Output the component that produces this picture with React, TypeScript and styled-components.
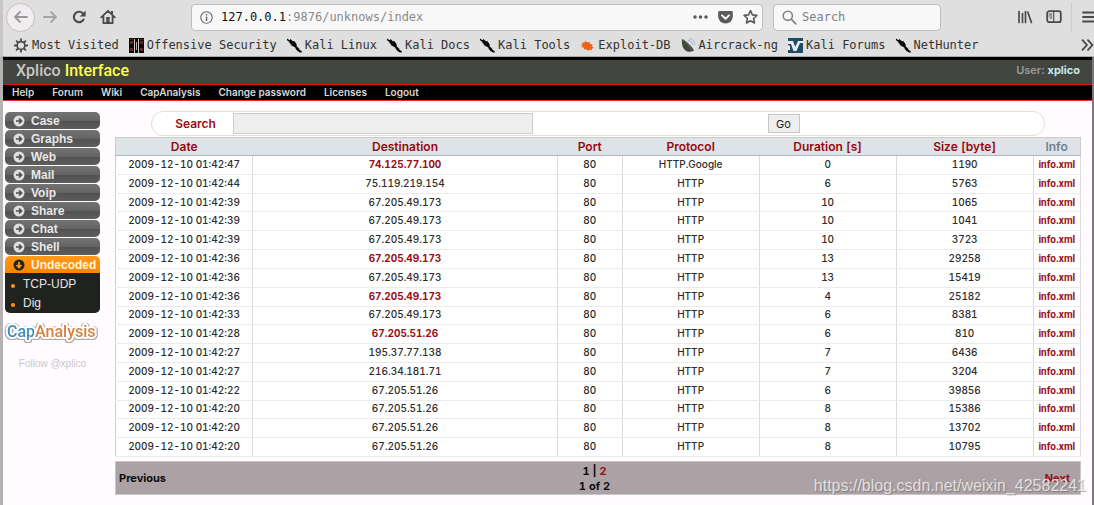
import React from 'react';
import styled, { createGlobalStyle } from 'styled-components';

const GlobalStyle = createGlobalStyle`
  * { box-sizing: border-box; }
  body { margin: 0; background: #fffbff; font-family: Inter, Roboto, "Liberation Sans", sans-serif; }
  a { text-decoration: none; }
  button, input { font: inherit; }
`;

const Screen = styled.div`
  position: relative;
  min-height: 100vh;
  display: flex;
  flex-direction: column;
`;

/* Browser window */
const Chrome = styled.header`
  background: #dfdfdf;
  border-bottom: 1px solid #a9a9a9;
  border-left: 3px solid #c9c5c5;
  font-family: "DejaVu Sans Mono", "Liberation Mono", monospace;
  font-size: 12px;
  color: #3b3b3b;
  overflow: hidden;
`;
const Toolbar = styled.div`
  display: flex;
  align-items: center;
  height: 34px;
  padding-left: 3px;
`;
const IconButton = styled.button<{ $round?: boolean }>`
  width: 29px;
  height: 29px;
  padding: 0;
  flex: none;
  display: flex;
  align-items: center;
  justify-content: center;
  color: #4a4a4a;
  border: 1px solid ${(p) => (p.$round ? '#c4c0c2' : 'transparent')};
  border-radius: 50%;
  background: ${(p) => (p.$round ? '#f1ecef' : 'transparent')};
`;
const Field = styled.div`
  display: flex;
  align-items: center;
  height: 27px;
  background: #f8f8f8;
  border: 1px solid #bdbdbd;
  border-radius: 4px;
`;
const AddressField = styled(Field)`
  flex: 1;
  margin-left: 69px;
  padding: 0 4px 0 8px;
  gap: 8px;
`;
const Address = styled.div`
  flex: 1;
  color: #8a8a8a;
  b { font-weight: 400; color: #111; }
`;
const SearchField = styled(Field)`
  width: 168px;
  margin: 0 69px 0 10px;
  padding: 0 8px;
  gap: 5px;
  svg { flex: none; }
  input {
    width: 100%;
    border: 0;
    padding: 0;
    background: transparent;
    color: #444;
    outline: 0;
  }
  input::placeholder { color: #808080; opacity: 1; }
`;
const Divider = styled.span`
  width: 1px;
  height: 30px;
  margin: 0 3px;
  background: #cbcbcb;
`;
const MenuButton = styled(IconButton)`
  width: 19px;
  justify-content: flex-end;
  border: 0;
`;
const Bookmarks = styled.nav`
  display: flex;
  align-items: center;
  height: 22px;
  padding-left: 11px;
  gap: 10px;
  white-space: nowrap;
`;
const Bookmark = styled.a`
  display: flex;
  align-items: center;
  gap: 3px;
  color: #333;
  svg { flex: none; }
`;
const Overflow = styled.button`
  margin-left: auto;
  border: 0;
  padding: 0;
  background: none;
  color: #444;
  display: flex;
`;

/* Site */
const Site = styled.div`
  flex: 1;
  border-left: 3px solid #b5b2b4;
  border-right: 2px solid #7b797c;
`;
const Banner = styled.div`
  display: flex;
  justify-content: space-between;
  height: 27px;
  padding: 0 12px 0 13px;
  border-top: 3px solid #000;
  background: #434541;
`;
const Brand = styled.h1`
  margin: 0;
  font-family: Roboto, sans-serif;
  font-size: 16px;
  line-height: 21px;
  font-weight: 500;
  color: #c8c8c8;
  span { color: #ffff4d; }
`;
const User = styled.div`
  font-size: 11px;
  line-height: 21px;
  font-weight: 600;
  color: #9a9a9a;
  a { color: #c3ecec; font-weight: 700; }
`;
const Menu = styled.nav`
  display: flex;
  align-items: center;
  gap: 18px;
  height: 17px;
  padding-left: 9px;
  background: #000;
  border-top: 1px solid #e01010;
  border-bottom: 1px solid #f02525;
  a { color: #d8d8d8; font-size: 10px; line-height: 15px; font-weight: 600; }
`;
const Body = styled.div`
  display: flex;
  align-items: flex-start;
  padding: 10px 11px 8px 2px;
  gap: 15px;
`;

const Sidebar = styled.aside`
  width: 95px;
  flex: none;
  padding-top: 1px;
  display: flex;
  flex-direction: column;
  gap: 1px;
  font-family: "Liberation Sans", Arial, sans-serif;
  font-size: 12px;
`;
const Section = styled.button<{ $open?: boolean }>`
  display: flex;
  align-items: center;
  height: 17px;
  padding: 0 0 0 8px;
  gap: 6px;
  border: 0;
  border-radius: ${(p) => (p.$open ? '5px 5px 0 0' : '5px')};
  font-weight: 700;
  white-space: nowrap;
  color: ${(p) => (p.$open ? '#fff6e0' : '#e8e8e8')};
  background: ${(p) =>
    p.$open
      ? 'linear-gradient(#ff9a18, #f98500)'
      : 'linear-gradient(#737373 0, #646464 50%, #505050 51%, #5e5e5e 100%)'};
  svg { flex: none; }
`;
const SubMenu = styled.ul`
  margin: -1px 0 0;
  padding: 1px 0;
  list-style: none;
  background: #20221f;
  border-radius: 0 0 5px 5px;
`;
const SubItem = styled.li`
  display: flex;
  align-items: center;
  height: 19px;
  padding-left: 6px;
  gap: 8px;
  &::before {
    content: "";
    width: 4px;
    height: 4px;
    margin-top: 4px;
    border-radius: 50%;
    background: #ff9210;
  }
  a { color: #e4e4e4; }
`;
const LogoLink = styled.a`
  display: block;
  height: 26px;
  margin-top: 5px;
  svg {
    display: block;
    overflow: visible;
    filter: drop-shadow(1px 0 0 #aaa) drop-shadow(-1px 0 0 #aaa) drop-shadow(0 1px 0 #aaa);
  }
  text { paint-order: stroke; }
`;
const Follow = styled.a`
  margin-top: 11px;
  text-align: center;
  font-size: 10px;
  line-height: 14px;
  color: #cac7ca;
`;

const Content = styled.main`
  flex: 1;
  min-width: 0;
`;
const SearchForm = styled.form`
  display: grid;
  grid-template-columns: 81px 300px 1fr;
  align-items: center;
  height: 25px;
  margin: 0 36px 1px;
  border: 1px solid #dfe2d0;
  border-radius: 12px;
  background: #fff;
  label {
    padding-left: 6px;
    text-align: center;
    font-size: 12px;
    font-weight: 600;
    color: #a00c14;
  }
  input {
    width: 100%;
    height: 21px;
    border: 1px solid #cdcdcd;
    background: #eee;
  }
`;
const GoButton = styled.button`
  justify-self: center;
  width: 32px;
  height: 19px;
  margin-right: 10px;
  padding: 0;
  border: 1px solid #c6c6c6;
  background: #eee;
  color: #222;
  font-size: 11px;
  line-height: 16px;
`;

const Table = styled.table`
  width: 100%;
  height: 320px;
  table-layout: fixed;
  border-collapse: collapse;
  border: 1px solid #ccc;
  background: #fff;
  color: #2c2c2c;
  text-align: center;
  font-variant-numeric: tabular-nums;
`;
const Head = styled.th<{ $w?: string }>`
  width: ${(p) => p.$w || 'auto'};
  height: 18px;
  padding: 0;
  font-size: 12px;
  line-height: 16px;
  font-weight: 600;
  background: #dde3e6;
  border-bottom: 1px solid #a9b6c4;
  color: #72808e;
  a { color: #96090f; }
`;
const Cell = styled.td`
  padding: 0 0 1px;
  font-size: 10px;
  line-height: 15px;
  font-weight: 500;
  border-bottom: 1px solid #ebebeb;
  border-right: 1px solid #dcdcdc;
`;
const InfoCell = styled(Cell)`
  font-family: Roboto, sans-serif;
`;
const CellLink = styled.a`
  color: #9a0f16;
  font-weight: 700;
`;
const Pager = styled.nav`
  display: grid;
  grid-template-columns: 1fr auto 1fr;
  align-items: center;
  height: 34px;
  margin-top: 4px;
  padding: 1px 10px 0 3px;
  border: 1px solid #c9c5c8;
  background: #aca2a5;
  font-size: 11px;
  line-height: 15px;
  font-weight: 700;
  font-variant-numeric: tabular-nums;
  color: #0c0c0c;
  text-align: center;
  a { color: #9a0f16; }
  > :first-child { text-align: left; }
  > :last-child { text-align: right; }
`;
const Watermark = styled.div`
  position: absolute;
  right: 8px;
  bottom: 10px;
  font: 16px/18px "Liberation Sans", Arial, sans-serif;
  color: rgba(245, 245, 245, 0.8);
  text-shadow: 1px 1px 1px rgba(90, 90, 90, 0.5);
  pointer-events: none;
`;

const stroke = { fill: 'none', stroke: 'currentColor', strokeWidth: 2, strokeLinecap: 'round', strokeLinejoin: 'round' } as const;

const ArrowIcon = ({ flip }: { flip?: boolean }) => (
  <svg width="16" height="16" viewBox="0 0 16 16" color={flip ? '#a5a5a5' : '#9a9698'}>
    <path d={flip ? 'M2 8h12M9 3l5 5-5 5' : 'M14 8H2M7 3L2 8l5 5'} {...stroke} strokeWidth={1.8} />
  </svg>
);
const ReloadIcon = () => (
  <svg width="16" height="16" viewBox="0 0 16 16">
    <path d="M12.6 10.6A5.2 5.2 0 1 1 12 4.6" {...stroke} strokeWidth={2.1} />
    <path d="M14.6 1.6v6H8.8z" fill="currentColor" />
  </svg>
);
const HomeIcon = () => (
  <svg width="16" height="16" viewBox="0 0 16 16">
    <path d="M1.2 8.3L8 1.8l6.8 6.5M3.4 7.5v6.6h9.2V7.5" {...stroke} strokeWidth={1.8} />
    <path d="M6.2 8h3.6v6H6.2z" fill="currentColor" />
    <path d="M11 2h2v3h-2z" fill="currentColor" />
    <circle cx="9" cy="11" r=".6" fill="#dfdfdf" />
  </svg>
);
const InfoIcon = () => (
  <svg width="13" height="13" viewBox="0 0 13 13" color="#686868">
    <circle cx="6.5" cy="6.5" r="5.7" {...stroke} strokeWidth={1.1} />
    <path d="M5.8 5.6h1.5V10H5.8zM5.8 3h1.5v1.5H5.8z" fill="currentColor" />
  </svg>
);
const FieldActions = () => (
  <svg width="66" height="16" viewBox="0 0 66 16" color="#5a5a5c">
    <circle cx="3" cy="8" r="1.8" fill="currentColor" />
    <circle cx="8.5" cy="8" r="1.8" fill="currentColor" />
    <circle cx="14" cy="8" r="1.8" fill="currentColor" />
    <path d="M27.5 2h12q1.3 0 1.3 1.4v4.2a7.2 6.7 0 0 1-14.6 0V3.4Q26.2 2 27.5 2z" fill="currentColor" />
    <path d="M30 6.4l3.5 3.4L37 6.4" {...stroke} stroke="#f8f8f8" />
    <path d="M58.5 1.7l1.9 4.2 4.5.5-3.3 3.1.9 4.5-4-2.3-4 2.3.9-4.5-3.3-3.1 4.5-.5z" {...stroke} strokeWidth={1.6} />
  </svg>
);
const MagnifierIcon = () => (
  <svg width="15" height="15" viewBox="0 0 15 15" color="#858585">
    <circle cx="5.8" cy="5.8" r="4.6" {...stroke} strokeWidth={1.6} />
    <path d="M9.4 9.4l4.4 4.4" {...stroke} strokeWidth={1.8} />
  </svg>
);
const LibraryIcon = () => (
  <svg width="16" height="14" viewBox="0 0 16 14">
    <path d="M2 1.5v11M5.5 3.5v9M8.5 1.5v11M10.8 2l3.6 10.5" {...stroke} strokeWidth={1.7} />
  </svg>
);
const PanelIcon = () => (
  <svg width="16" height="14" viewBox="0 0 16 14">
    <rect x="1.2" y="1.2" width="13.6" height="11" rx="2" {...stroke} strokeWidth={1.8} />
    <path d="M7.7 1.5v10.5M3.2 4h2.6M3.2 6h2.6M4.2 8h1.6" {...stroke} strokeWidth={1.1} />
  </svg>
);
const MenuIcon = () => (
  <svg width="12" height="14" viewBox="0 0 12 14">
    <path d="M1 2.5h14M1 7h14M1 11.5h14" {...stroke} strokeWidth={1.8} />
  </svg>
);
const ChevronsIcon = () => (
  <svg width="13" height="12" viewBox="0 0 13 12">
    <path d="M1.5 1.2L6 6l-4.5 4.8M7 1.2L11.5 6 7 10.8" {...stroke} strokeWidth={1.8} />
  </svg>
);

const GearMark = () => (
  <svg width="15" height="15" viewBox="0 0 15 15" color="#4a4a4a">
    <circle cx="7" cy="7.5" r="3.9" {...stroke} strokeWidth={1.6} />
    <path d="M7 1.2v2M7 11.8v2M.7 7.5h2M11.3 7.5h2M2.6 3.1L4 4.5M10 10.5l1.4 1.4M2.6 11.9L4 10.5M10 4.5l1.4-1.4" {...stroke} strokeWidth={1.8} />
  </svg>
);
const OffensiveMark = () => (
  <svg width="15" height="15" viewBox="0 0 15 15">
    <path d="M0 0h15v15H0z" fill="#0d0808" />
    <path d="M1 3h3v3H1zM11 3h3v3h-3zM1 10h3v3H1zM11 10h3v3h-3z" fill="#5a2a27" />
    <path d="M0 1h4v1H0zM11 1h4v1h-4z" fill="#432020" />
    <path d="M5 15V1h1v14zM9 15V1h1v14z" fill="#cfc6c6" />
    <path d="M7 4h1v8H7z" fill="#b9aeae" />
  </svg>
);
const KaliMark = () => (
  <svg width="15" height="15" viewBox="0 0 15 15">
    <path d="M0 .5l2.5 1.8L3.5 1l2 2 2 .2 2 2.8.3 2.5 2 1.7 1 1.8 2 1.2v1.3h-1.8L10.5 13 8.8 11l-.6-1.5L6 8.3 3.5 7l.8-.8L2 4.8l.8-.6L0 2.3z" fill="#080808" />
  </svg>
);
const ExploitMark = () => (
  <svg width="15" height="15" viewBox="0 0 15 15">
    <path d="M2 4l2 .7L5.5 3l1.8 1.2L9.5 4l.8 2 2.5.8-.8 1.5 1.8 2-2.2.2.2 2-2.3-.8-1.7 1-1.5-1.5-2.5.3.3-1.700L1 9l1.700-1L.5 6.500l2.300-.3z" fill="#ee6216" />
  </svg>
);
const AircrackMark = () => (
  <svg width="15" height="15" viewBox="0 0 15 15">
    <path d="M1 1c3.5 1.5 10 7 12 11.5-3 1.8-6.500 1.600-8.500 0C1.300 10.300.5 5 1 1z" fill="#41483f" />
    <path d="M1.5 1.5c3.5 2.5 7 6 9.5 10.5" stroke="#656c60" fill="none" />
    <path d="M7 2.5c2.5 0 4.5 2 4.5 4.5M8 .7c3.3 0 5.700 2.500 6 5.800" stroke="#a8bfe4" strokeWidth="1.3" fill="none" />
  </svg>
);
const ForumsMark = () => (
  <svg width="15" height="15" viewBox="0 0 15 15">
    <path d="M0 0h15v15H0z" fill="#1d4c66" />
    <path d="M0 3h5l2.3 6L10 3h5v2h-3L8.5 13h-3L3 6H0z" fill="#e7edf0" />
    <path d="M0 7l2 1v4H0z" fill="#e7edf0" />
  </svg>
);
const SectionIcon = ({ open }: { open?: boolean }) => (
  <svg width="12" height="12" viewBox="0 0 12 12">
    <circle cx="6" cy="6" r="5.5" fill={open ? '#2a2418' : '#dedede'} />
    <path
      d="M3 6h5M6 3.5L8.5 6 6 8.5"
      transform={open ? 'rotate(90 6 6)' : undefined}
      fill="none"
      stroke={open ? '#ff9a18' : '#4d4d4d'}
      strokeWidth="1.7"
    />
  </svg>
);
const CapAnalysisLogo = () => (
  <svg width="95" height="26" viewBox="0 0 95 26" fontFamily="Roboto, sans-serif" fontSize="16" fontWeight="500" strokeLinejoin="round">
    <text x="2" y="18" fill="#3f8fbe" stroke="#fff" strokeWidth="4">
      Cap<tspan fill="#d8803f">Analysis</tspan>
    </text>
  </svg>
);

const bookmarks: [string, React.FC][] = [
  ['Most Visited', GearMark],
  ['Offensive Security', OffensiveMark],
  ['Kali Linux', KaliMark],
  ['Kali Docs', KaliMark],
  ['Kali Tools', KaliMark],
  ['Exploit-DB', ExploitMark],
  ['Aircrack-ng', AircrackMark],
  ['Kali Forums', ForumsMark],
  ['NetHunter', KaliMark],
];
const menu = ['Help', 'Forum', 'Wiki', 'CapAnalysis', 'Change password', 'Licenses', 'Logout'];
const sections = ['Case', 'Graphs', 'Web', 'Mail', 'Voip', 'Share', 'Chat', 'Shell'];
const columns: [string, string][] = [
  ['Date', '14.2%'],
  ['Destination', '31.6%'],
  ['Port', '6.7%'],
  ['Protocol', '14.2%'],
  ['Duration [s]', '14.2%'],
  ['Size [byte]', '14.2%'],
];

type Flow = { time: string; dest: string; protocol?: string; duration: number; size: number; unread?: boolean };
const flows: Flow[] = [
  { time: '01:42:47', dest: '74.125.77.100', protocol: 'HTTP.Google', duration: 0, size: 1190, unread: true },
  { time: '01:42:44', dest: '75.119.219.154', duration: 6, size: 5763 },
  { time: '01:42:39', dest: '67.205.49.173', duration: 10, size: 1065 },
  { time: '01:42:39', dest: '67.205.49.173', duration: 10, size: 1041 },
  { time: '01:42:39', dest: '67.205.49.173', duration: 10, size: 3723 },
  { time: '01:42:36', dest: '67.205.49.173', duration: 13, size: 29258, unread: true },
  { time: '01:42:36', dest: '67.205.49.173', duration: 13, size: 15419 },
  { time: '01:42:36', dest: '67.205.49.173', duration: 4, size: 25182, unread: true },
  { time: '01:42:33', dest: '67.205.49.173', duration: 6, size: 8381 },
  { time: '01:42:28', dest: '67.205.51.26', duration: 6, size: 810, unread: true },
  { time: '01:42:27', dest: '195.37.77.138', duration: 7, size: 6436 },
  { time: '01:42:27', dest: '216.34.181.71', duration: 7, size: 3204 },
  { time: '01:42:22', dest: '67.205.51.26', duration: 6, size: 39856 },
  { time: '01:42:20', dest: '67.205.51.26', duration: 8, size: 15386 },
  { time: '01:42:20', dest: '67.205.51.26', duration: 8, size: 13702 },
  { time: '01:42:20', dest: '67.205.51.26', duration: 8, size: 10795 },
];

export default function App() {
  return (
    <Screen>
      <GlobalStyle />
      <Chrome>
        <Toolbar>
          <IconButton $round aria-label="Back"><ArrowIcon /></IconButton>
          <IconButton aria-label="Forward"><ArrowIcon flip /></IconButton>
          <IconButton aria-label="Reload"><ReloadIcon /></IconButton>
          <IconButton aria-label="Home"><HomeIcon /></IconButton>
          <AddressField>
            <InfoIcon />
            <Address><b>127.0.0.1</b>:9876/unknows/index</Address>
            <FieldActions />
          </AddressField>
          <SearchField>
            <MagnifierIcon />
            <input aria-label="Web search" placeholder="Search" />
          </SearchField>
          <IconButton aria-label="Library"><LibraryIcon /></IconButton>
          <IconButton aria-label="Sidebars"><PanelIcon /></IconButton>
          <Divider />
          <MenuButton aria-label="Menu"><MenuIcon /></MenuButton>
        </Toolbar>
        <Bookmarks>
          {bookmarks.map(([name, Mark]) => (
            <Bookmark href="#" key={name}><Mark />{name}</Bookmark>
          ))}
          <Overflow aria-label="More bookmarks"><ChevronsIcon /></Overflow>
        </Bookmarks>
      </Chrome>

      <Site>
        <Banner>
          <Brand>Xplico <span>Interface</span></Brand>
          <User>User: <a href="#">xplico</a></User>
        </Banner>
        <Menu>
          {menu.map((item) => <a href="#" key={item}>{item}</a>)}
        </Menu>
        <Body>
          <Sidebar>
            {sections.map((name) => (
              <Section key={name}><SectionIcon />{name}</Section>
            ))}
            <Section $open><SectionIcon open />Undecoded</Section>
            <SubMenu>
              <SubItem><a href="#">TCP-UDP</a></SubItem>
              <SubItem><a href="#">Dig</a></SubItem>
            </SubMenu>
            <LogoLink href="#"><CapAnalysisLogo /></LogoLink>
            <Follow href="#">Follow @xplico</Follow>
          </Sidebar>

          <Content>
            <SearchForm>
              <label htmlFor="search">Search</label>
              <input id="search" type="text" />
              <GoButton type="button">Go</GoButton>
            </SearchForm>
            <Table>
              <thead>
                <tr>
                  {columns.map(([name, width]) => (
                    <Head key={name} $w={width}><a href="#">{name}</a></Head>
                  ))}
                  <Head>Info</Head>
                </tr>
              </thead>
              <tbody>
                {flows.map((f, i) => (
                  <tr key={i}>
                    <Cell>2009-12-10 {f.time}</Cell>
                    <Cell>{f.unread ? <CellLink href="#">{f.dest}</CellLink> : f.dest}</Cell>
                    <Cell>80</Cell>
                    <Cell>{f.protocol || 'HTTP'}</Cell>
                    <Cell>{f.duration}</Cell>
                    <Cell>{f.size}</Cell>
                    <InfoCell><CellLink href="#">info.xml</CellLink></InfoCell>
                  </tr>
                ))}
              </tbody>
            </Table>
            <Pager>
              <span>Previous</span>
              <div>
                <div>1 | <a href="#">2</a></div>
                <div>1 of 2</div>
              </div>
              <a href="#">Next</a>
            </Pager>
          </Content>
        </Body>
      </Site>
      <Watermark>https://blog.csdn.net/weixin_42582241</Watermark>
    </Screen>
  );
}
